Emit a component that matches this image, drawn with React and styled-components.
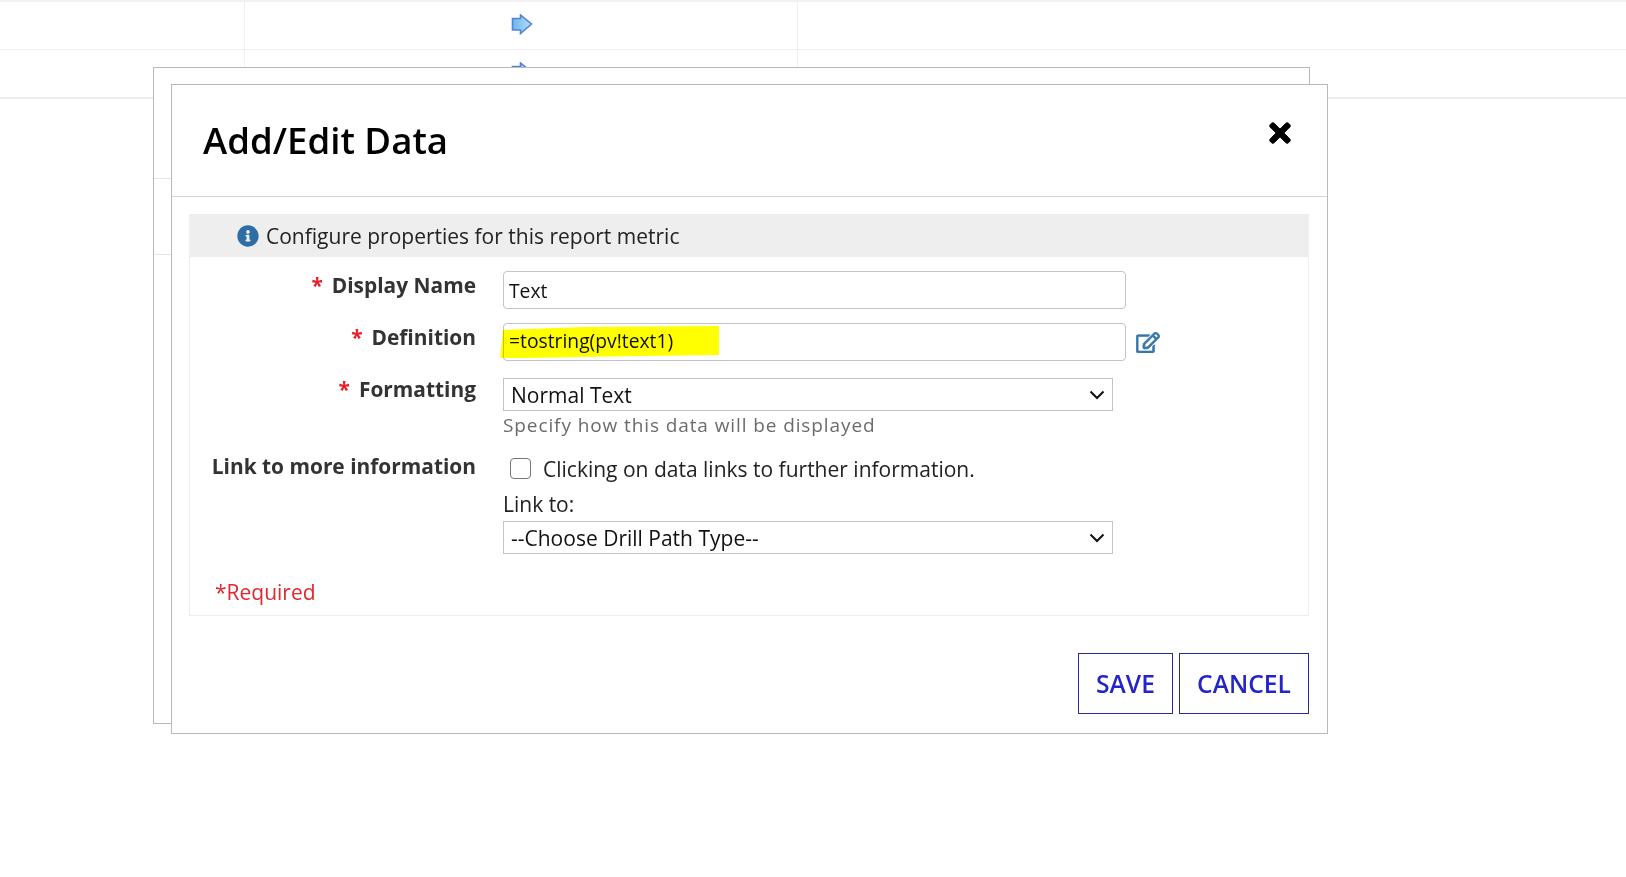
import React from 'react';
import styled, { createGlobalStyle } from 'styled-components';
import { FaInfoCircle, FaRegEdit, FaTimes } from 'react-icons/fa';

const GlobalStyle = createGlobalStyle`
  html, body {
    margin: 0;
    padding: 0;
    height: 100%;
    overflow: hidden;
    background: #fff;
    font-family: 'Open Sans', 'Liberation Sans', sans-serif;
  }
`;

const Page = styled.div`
  position: relative;
  width: 1626px;
  height: 877px;
  overflow: hidden;
`;

const TableRow = styled.div`
  display: grid;
  grid-template-columns: 245px 553px 1fr;
  height: ${(p) => p.$height}px;
  border-top: ${(p) => (p.$first ? '2px solid #f2f2f2' : 'none')};
  border-bottom: ${(p) => p.$line};
  box-sizing: border-box;
`;

const TableCell = styled.div`
  border-right: ${(p) => (p.$last ? 'none' : '1px solid #f0f0f0')};
  display: flex;
  justify-content: center;
  padding: 12px 0 0 2px;
  height: ${(p) => (p.$clip ? '67px' : 'auto')};
`;

const BackModal = styled.div`
  position: absolute;
  left: 153px;
  top: 67px;
  width: 1157px;
  height: 657px;
  box-sizing: border-box;
  background: #fff;
  border: 1px solid #b9b9b9;
  padding-top: 110px;
`;

const BackRow = styled.div`
  height: 76px;
  box-sizing: border-box;
  border-top: 1px solid #e6e6e6;
`;

const Modal = styled.div`
  position: absolute;
  left: 171px;
  top: 84px;
  width: 1157px;
  height: 650px;
  box-sizing: border-box;
  background: #fff;
  border: 1px solid #b9b9b9;
  display: flex;
  flex-direction: column;
`;

const Header = styled.div`
  height: 112px;
  box-sizing: border-box;
  border-bottom: 1px solid #d6d6d6;
  display: flex;
  justify-content: space-between;
  padding: 31px 32px 0 31px;
`;

const Title = styled.h2`
  margin: 0;
  font-size: 36.6px;
  line-height: 48px;
  font-weight: 600;
  color: #000;
`;

const Close = styled.div`
  margin-top: 2px;
  font-size: 30px;
  line-height: 0;
  color: #000;

  svg {
    stroke: currentColor;
    stroke-width: 16px;
  }
`;

const Panel = styled.div`
  margin: 17px 18px 0 17px;
  height: 402px;
  box-sizing: border-box;
  border: 1px solid #eee;
  border-top: none;
`;

const Notice = styled.div`
  height: 43px;
  margin-right: -1px;
  margin-left: -1px;
  background: #eee;
  display: flex;
  align-items: center;
  padding-left: 48px;
  gap: 7px;
  font-size: 21px;
  color: #222;
`;

const InfoIcon = styled(FaInfoCircle)`
  width: 22px;
  height: 22px;
  color: #2f6ea5;
`;

const Form = styled.div`
  display: grid;
  grid-template-columns: 286px 660px;
  column-gap: 27px;
  align-items: start;
  padding-top: 14px;
`;

const Label = styled.div`
  text-align: right;
  font-size: 20.9px;
  line-height: 28px;
  font-weight: 700;
  color: #333;
  margin-top: ${(p) => p.$top}px;
`;

const Star = styled.span`
  color: #e8202a;
  margin-right: 9px;
`;

const FieldRow = styled.div`
  display: flex;
  align-items: center;
  gap: 10px;
  margin-bottom: ${(p) => p.$bottom || 0}px;
`;

const TextField = styled.div`
  position: relative;
  flex: none;
  width: 623px;
  height: 38px;
  box-sizing: border-box;
  border: 1px solid #c4c4c4;
  border-radius: 4px;
  padding-left: 5px;
  font-size: 19.3px;
  line-height: ${(p) => p.$line}px;
  color: #111;
`;

const Highlight = styled.svg`
  position: absolute;
  left: -4px;
  top: 1px;
  width: 219px;
  height: 33px;
  mix-blend-mode: multiply;
`;

const EditIcon = styled(FaRegEdit)`
  width: 24px;
  height: 21px;
  color: #3a76a8;
  stroke: currentColor;
  stroke-width: 16px;
`;

const SelectBox = styled.div`
  width: 610px;
  height: 33px;
  box-sizing: border-box;
  border: 1px solid #c4c4c4;
  display: flex;
  align-items: center;
  justify-content: space-between;
  padding: 0 7px;
  font-size: 21px;
  color: #111;
`;

const Hint = styled.div`
  font-size: 19px;
  line-height: 28px;
  letter-spacing: 0.9px;
  color: #6b6b6b;
  margin-bottom: 18px;
`;

const CheckRow = styled.label`
  display: flex;
  align-items: center;
  height: 22px;
  padding-left: 7px;
  gap: 12px;
  font-size: 21px;
  color: #222;
`;

const CheckText = styled.span`
  padding-top: 2px;
`;

const Box = styled.span`
  width: 21px;
  height: 21px;
  box-sizing: border-box;
  border: 1.5px solid #767676;
  border-radius: 4px;
`;

const LinkTo = styled.div`
  font-size: 21px;
  line-height: 30px;
  margin: 10px 0 2px;
  color: #222;
`;

const Required = styled.div`
  margin: 23px 0 0 25px;
  font-size: 21px;
  line-height: 30px;
  color: #e0282e;
`;

const Footer = styled.div`
  display: flex;
  justify-content: flex-end;
  gap: 6px;
  margin: 37px 18px 0 0;
`;

const Button = styled.button`
  height: 61px;
  width: ${(p) => p.$width}px;
  padding: 0;
  background: #fff;
  border: 1.5px solid #2a2a9e;
  border-radius: 0;
  font-family: inherit;
  font-size: 24.6px;
  font-weight: 600;
  color: #2424c8;
`;

const Chevron = () => (
  <svg width="16" height="10" viewBox="0 0 16 10">
    <path d="M1.5 1.5 L8 8 L14.5 1.5" fill="none" stroke="#111" strokeWidth="2" />
  </svg>
);

const Arrow = () => (
  <svg width="22" height="21" viewBox="0 0 22 21">
    <defs>
      <linearGradient id="arrowFill" x1="0" y1="0" x2="1" y2="0">
        <stop offset="0" stopColor="#6db4ef" />
        <stop offset="1" stopColor="#b4defa" />
      </linearGradient>
    </defs>
    <path
      d="M1.5 4.5 H9.5 V1 L20.5 10 L9.5 19.5 V16 H1.5 Z"
      fill="url(#arrowFill)"
      stroke="#5583d2"
      strokeWidth="1.6"
    />
  </svg>
);

export default function App() {
  return (
    <Page>
      <GlobalStyle />
      <TableRow $height={50} $first $line="1px solid #eee">
        <TableCell />
        <TableCell><Arrow /></TableCell>
        <TableCell $last />
      </TableRow>
      <TableRow $height={49} $line="2px solid #eee">
        <TableCell $clip />
        <TableCell $clip><Arrow /></TableCell>
        <TableCell $last />
      </TableRow>

      <BackModal>
        <BackRow />
        <BackRow />
      </BackModal>

      <Modal>
        <Header>
          <Title>Add/Edit Data</Title>
          <Close><FaTimes /></Close>
        </Header>
        <Panel>
          <Notice>
            <InfoIcon />
            Configure properties for this report metric
          </Notice>
          <Form>
            <Label $top={0}><Star>*</Star>Display Name</Label>
            <FieldRow $bottom={14}>
              <TextField $line={38}>Text</TextField>
            </FieldRow>

            <Label $top={0}><Star>*</Star>Definition</Label>
            <FieldRow $bottom={17}>
              <TextField $line={34}>
                =tostring(pv!text1)
                <Highlight viewBox="0 0 219 33" preserveAspectRatio="none">
                  <path d="M3 5 L84 2 L219 1 V30 L140 31 L80 32 L28 33 L0 34 Z" fill="#ffff00" />
                </Highlight>
              </TextField>
              <EditIcon />
            </FieldRow>

            <Label $top={-3}><Star>*</Star>Formatting</Label>
            <div>
              <SelectBox>Normal Text<Chevron /></SelectBox>
              <Hint>Specify how this data will be displayed</Hint>
            </div>

            <Label $top={-5}>Link to more information</Label>
            <div>
              <CheckRow><Box /><CheckText>Clicking on data links to further information.</CheckText></CheckRow>
              <LinkTo>Link to:</LinkTo>
              <SelectBox>--Choose Drill Path Type--<Chevron /></SelectBox>
            </div>
          </Form>
          <Required>*Required</Required>
        </Panel>
        <Footer>
          <Button $width={95}>SAVE</Button>
          <Button $width={130}>CANCEL</Button>
        </Footer>
      </Modal>
    </Page>
  );
}
